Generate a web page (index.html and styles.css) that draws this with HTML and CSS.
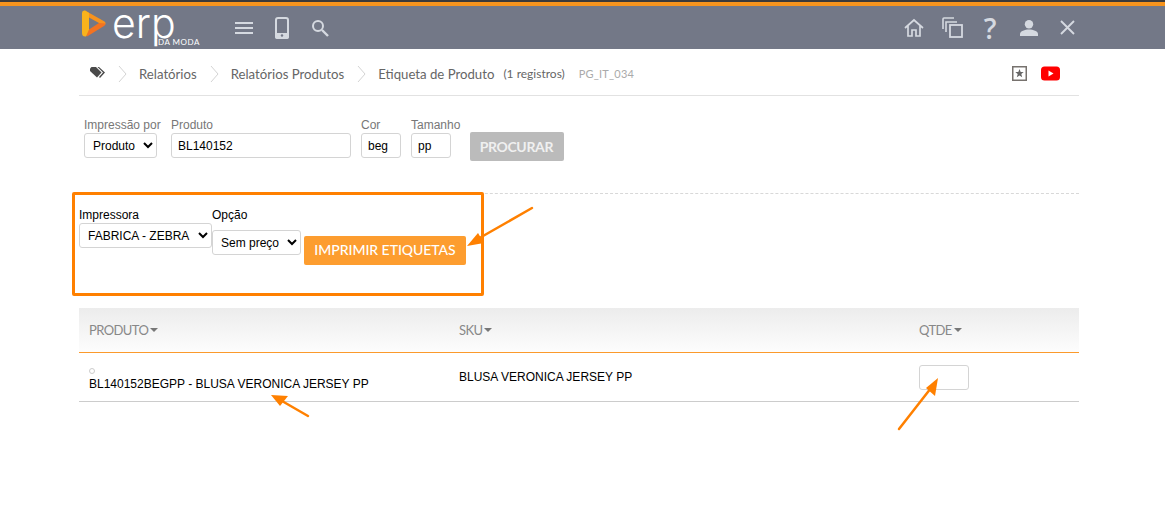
FILE: index.html
```html
<!DOCTYPE html>
<html lang="pt">
<head>
<meta charset="utf-8">
<title>Etiqueta de Produto</title>
<link rel="stylesheet" href="styles.css">
</head>
<body>
<header class="topbar">
  <div class="brand">
    <svg class="brand-mark" width="24" height="27" viewBox="0 0 24 27"><path d="M3 .5 22.500 11.500Q24.500 13 22.500 15L17 16 17 13 7 7.500 3 7Z" fill="#f7931e"/><path d="M17 13 23.500 13.500Q23.500 15 22 16L5 26.500 3 24 7 19.500Z" fill="#f37321"/><path d="M0 3Q0 0 3 .5L7 3V19.500L4 26.500Q0 27 0 23Z" fill="#f9b31c"/></svg>
    <span class="brand-word">erp</span>
    <span class="brand-sub">DA MODA</span>
  </div>
  <nav class="nav-left">
    <svg width="18" height="12" viewBox="0 0 18 12"><path d="M0 1h18M0 6h18M0 11h18" stroke="#d5d9e0" stroke-width="2"/></svg>
    <svg width="14" height="22" viewBox="0 0 14 22"><rect x="1" y="1" width="12" height="20" rx="2" fill="none" stroke="#d5d9e0" stroke-width="2"/><rect x="0" y="16" width="14" height="6" rx="2" fill="#d5d9e0"/><circle cx="7" cy="18.500" r="1.200" fill="#737887"/></svg>
    <svg width="18" height="18" viewBox="0 0 18 18"><circle cx="7" cy="7" r="5" fill="none" stroke="#d5d9e0" stroke-width="2"/><path d="M11 11l6 6" stroke="#d5d9e0" stroke-width="2.400"/></svg>
  </nav>
  <nav class="nav-right">
    <svg class="ic-home" width="20" height="20" viewBox="0 0 20 20"><path d="M1 10 10 2l9 8M4 8v10h4v-6h4v6h4V8" fill="none" stroke="#d5d9e0" stroke-width="1.700"/></svg>
    <svg class="ic-copy" width="21" height="21" viewBox="0 0 21 21"><path d="M1 12V2a1 1 0 0 1 1-1h10M4 15V5h11" fill="none" stroke="#d5d9e0" stroke-width="1.600"/><rect x="8" y="8" width="12" height="12" fill="none" stroke="#d5d9e0" stroke-width="1.800"/></svg>
    <span class="help">?</span>
    <svg class="ic-user" width="18" height="16" viewBox="0 0 18 16"><circle cx="9" cy="4.200" r="4.200" fill="#d5d9e0"/><path d="M0 16v-2c0-3 5-4.500 9-4.500s9 1.500 9 4.500v2Z" fill="#d5d9e0"/></svg>
    <svg class="ic-close" width="15" height="15" viewBox="0 0 15 15"><path d="M1 1l13 13M14 1 1 14" stroke="#d5d9e0" stroke-width="1.900"/></svg>
  </nav>
</header>

<main class="content">
  <div class="crumbs">
    <svg class="tag" width="15" height="11" viewBox="0 0 15 11"><path d="M0 1.500 1.500 0H6l5.500 5.500L7 10.500 0 4Z" fill="#4a4a4a"/><path d="M7.500 0h1.500L15 5.500 10 11 9 10l4-4.500Z" fill="#4a4a4a"/></svg>
    <svg class="chev" width="9" height="18" viewBox="0 0 9 18"><path d="M1 1l7 8-7 8" fill="none" stroke="#d4d4d4"/></svg>
    <span class="crumb">Relatórios</span>
    <svg class="chev" width="9" height="18" viewBox="0 0 9 18"><path d="M1 1l7 8-7 8" fill="none" stroke="#d4d4d4"/></svg>
    <span class="crumb">Relatórios Produtos</span>
    <svg class="chev" width="9" height="18" viewBox="0 0 9 18"><path d="M1 1l7 8-7 8" fill="none" stroke="#d4d4d4"/></svg>
    <span class="crumb">Etiqueta de Produto</span>
    <span class="count">(1 registros)</span>
    <span class="code">PG_IT_034</span>
    <span class="crumb-actions">
      <svg width="15" height="15" viewBox="0 0 15 15"><rect x=".75" y=".75" width="13.500" height="13.500" fill="#fff" stroke="#77726e" stroke-width="1.500"/><path d="M7.500 3 8.700 6h3l-2.400 2 .9 3.200-2.700-1.800-2.700 1.800.9-3.200L3.300 6h3Z" fill="#666"/></svg>
      <svg width="19" height="15" viewBox="0 0 19 15"><rect width="19" height="14" y=".5" rx="3.500" fill="#f00"/><path d="M7.500 4.500v6l5-3Z" fill="#fff"/></svg>
    </span>
  </div>

  <form class="search">
    <label class="field field-first">Impressão por
      <select class="ctl sel-print"><option>Produto</option></select>
    </label>
    <label class="field">Produto
      <input class="ctl in-prod" value="BL140152">
    </label>
    <label class="field">Cor
      <input class="ctl in-small" value="beg">
    </label>
    <label class="field">Tamanho
      <input class="ctl in-small" value="pp">
    </label>
    <button type="button" class="btn btn-grey">PROCURAR</button>
  </form>

  <form class="print">
    <label class="field dark">Impressora
      <select class="ctl sel-printer"><option>FABRICA - ZEBRA</option></select>
    </label>
    <label class="field dark">Opção
      <select class="ctl sel-option"><option>Sem preço</option></select>
    </label>
    <button type="button" class="btn btn-orange">IMPRIMIR ETIQUETAS</button>
  </form>

  <section class="grid-table">
    <div class="thead">
      <span class="th">PRODUTO<i class="caret"></i></span>
      <span class="th">SKU<i class="caret"></i></span>
      <span class="th">QTDE<i class="caret"></i></span>
    </div>
    <div class="row">
      <div class="cell-prod">
        <i class="dot"></i>
        <span>BL140152BEGPP - BLUSA VERONICA JERSEY PP</span>
      </div>
      <span class="cell-sku">BLUSA VERONICA JERSEY PP</span>
      <input class="ctl in-qty">
    </div>
  </section>
</main>

<div class="note-box"></div>
<svg class="notes" width="1165" height="514" viewBox="0 0 1165 514">
  <g fill="none" stroke="#ff8000" stroke-width="2.500" stroke-linecap="round">
    <path d="M532 208 476 240"/>
    <path d="M308 416 282 401"/>
    <path d="M899 429 931 388"/>
  </g>
  <g fill="#ff8000">
    <path d="M467 246 478 233 484 243Z"/>
    <path d="M271 395 288 396 280 406Z"/>
    <path d="M938 378 935 396 926 388Z"/>
  </g>
</svg>
</body>
</html>
```
FILE: styles.css
```css
* { box-sizing: border-box; }
html, body { margin: 0; height: 514px; overflow: hidden; background: #fff; }
body { position: relative; font-family: "Liberation Sans", Arial, sans-serif; font-size: 12px; color: #000; }

.topbar {
  height: 49px;
  display: flex;
  align-items: center;
  padding: 6px 90px 0 82px;
  background: linear-gradient(#3d3a38 0 2px, #f7941d 2px 6px, #737887 6px);
}

.brand { position: relative; width: 116px; height: 43px; display: flex; align-items: flex-start; flex: none; }
.brand-mark { margin-top: 4px; flex: none; }
.brand-word { margin: -8px 0 0 6px; font: 300 41px/50px Inter, sans-serif; color: #fff; }
.brand-sub { position: absolute; left: 76px; top: 32px; font: 400 8px/8px Lato, sans-serif; letter-spacing: .5px; color: #fff; white-space: nowrap; }

.nav-left { display: flex; align-items: center; gap: 22px; margin-left: 37px; }
.nav-right { display: flex; align-items: center; margin-left: auto; }
.ic-home { margin-right: 18px; }
.help { width: 16px; margin: 0 0 0 19px; font: 600 28px/1 "Open Sans", sans-serif; color: #d5d9e0; text-align: center; }
.ic-user { margin: 0 22px 0 22px; }

.content { width: 1000px; margin-left: 79px; }

.crumbs {
  height: 47px;
  display: flex;
  align-items: center;
  padding-top: 3px;
  border-bottom: 1px solid #e2e2e2;
  font-family: Lato, sans-serif;
  color: #666;
}
.tag { margin-left: 11px; margin-top: -3px; }
.chev { margin-left: 13px; }
.crumb { margin-left: 12px; font-size: 13.200px; }
.count { margin-left: 9px; font-size: 12px; }
.code { margin-left: 14px; font-size: 11px; color: #aaa; letter-spacing: .2px; }
.crumb-actions { display: flex; gap: 14px; margin-left: auto; margin-right: 19px; }

.field { display: flex; flex-direction: column; font-size: 12px; line-height: 14px; color: #777; }
.dark { color: #000; }
.ctl {
  height: 25px;
  margin: 1px 0 0;
  padding: 0 0 0 4px;
  border: 1px solid #d4d4d4;
  border-radius: 3px;
  background: #fff;
  font: 12px "Liberation Sans", Arial, sans-serif;
  color: #000;
}

.search {
  height: 98px;
  display: flex;
  align-items: flex-start;
  gap: 10px;
  padding: 22px 0 0 5px;
  border-bottom: 1px dashed #d8d8d8;
}
.field-first { width: 77px; }
.sel-print { width: 73px; }
.in-prod { width: 180px; padding-left: 6px; }
.in-small { width: 40px; padding-left: 6px; }
.btn {
  border: 0;
  border-radius: 2px;
  color: #fff;
  font: 700 14px/1 Lato, sans-serif;
  height: 29px;
  padding: 0;
}
.btn-grey { width: 94px; margin: 14px 0 0; padding-right: 2px; background: #bbb; color: #f0f0f0; letter-spacing: -.35px; }

.print { height: 114px; display: flex; align-items: flex-start; padding-top: 14px; }
.sel-printer { width: 133px; }
.sel-option { width: 89px; margin-top: 8px; }
.btn-orange { width: 162px; margin: 28px 0 0 3px; padding-bottom: 2px; background: #fd9d2f; font-weight: 500; letter-spacing: -.05px; }

.thead, .row { display: grid; grid-template-columns: 370px 460px 170px; padding-left: 10px; }
.thead {
  height: 45px;
  align-items: center;
  background: linear-gradient(#ececec, #fdfdfd);
  border-bottom: 1px solid #fb9a2c;
  font-family: Lato, sans-serif;
  color: #888;
}
.th { font-size: 13px; letter-spacing: -.6px; display: flex; align-items: center; }
.caret { margin-left: 2px; border: 4px solid transparent; border-top-color: #777; border-bottom: 0; }
.row { height: 49px; border-bottom: 1px solid #ccc; align-items: start; }
.cell-prod { display: flex; flex-direction: column; padding-top: 15px; line-height: 14px; }
.dot { width: 6px; height: 6px; margin-bottom: 3px; border: 1px solid #ccc; border-radius: 50%; }
.cell-sku { padding-top: 17px; line-height: 14px; }
.in-qty { width: 50px; margin-top: 12px; }

.note-box { position: absolute; left: 72px; top: 192px; width: 412px; height: 104px; border: 3px solid #ff8000; border-radius: 2px; }
.notes { position: absolute; left: 0; top: 0; pointer-events: none; }
```
